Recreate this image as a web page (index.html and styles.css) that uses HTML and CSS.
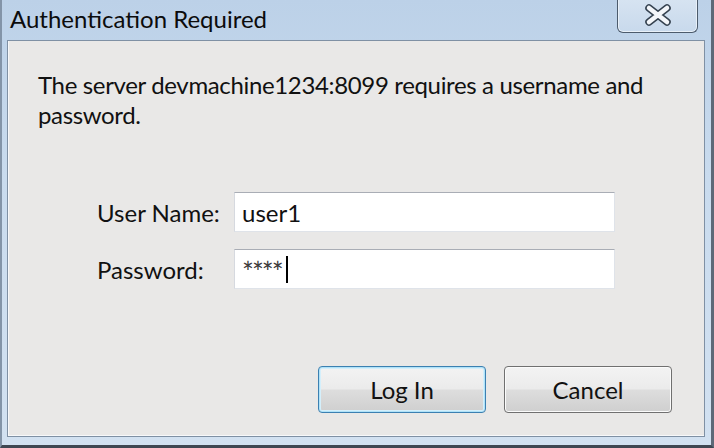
FILE: index.html
```html
<!DOCTYPE html>
<html>
<head>
<meta charset="utf-8">
<link rel="stylesheet" href="styles.css">
</head>
<body>
<div class="window">
  <div class="titlebar">
    <div class="title">Authentication Required</div>
    <div class="close">
      <svg width="30" height="24" viewBox="0 0 30 24">
        <g stroke-linecap="round" fill="none">
          <path d="M6 5 L24 19 M24 5 L6 19" stroke="#34414f" stroke-width="7.5"/>
          <path d="M6 5 L24 19 M24 5 L6 19" stroke="#f3f6fa" stroke-width="4.5"/>
        </g>
      </svg>
    </div>
  </div>
  <div class="content">
    <p class="message">The server devmachine1234:8099 requires a username and password.</p>
    <div class="form">
      <label class="label">User Name:</label>
      <div class="field"><span class="value">user1</span></div>
      <label class="label">Password:</label>
      <div class="field"><span class="stars">****</span><span class="caret"></span></div>
    </div>
    <div class="buttons">
      <div class="btn default">Log In</div>
      <div class="btn">Cancel</div>
    </div>
  </div>
</div>
</body>
</html>
```

FILE: styles.css
```css
html, body {
  margin: 0;
  padding: 0;
  background: #4a4f55;
}

.window {
  width: 714px;
  height: 448px;
  box-sizing: border-box;
  display: flex;
  flex-direction: column;
  background: linear-gradient(#bcd1e8, #c9dbee 40%, #d2e1f1);
  border-left: 2px solid #8394a8;
  border-right: 3px solid #5d6978;
  border-bottom: 3px solid #3f4752;
  padding-bottom: 8px;
  font-family: Lato, "Open Sans", sans-serif;
  color: #111;
}

.titlebar {
  height: 40px;
  flex: none;
  display: flex;
  align-items: flex-start;
}

.title {
  padding-left: 8px;
  line-height: 38px;
  font-size: 24px;
  color: #0c0c0c;
}

.close {
  margin-left: auto;
  margin-right: 13px;
  width: 81px;
  height: 33px;
  box-sizing: border-box;
  border: 1px solid #4c5b6c;
  border-top: none;
  border-radius: 0 0 6px 6px;
  background: linear-gradient(#d6e3f1, #c8d9ec);
  box-shadow: inset 0 -1px 0 #e8f0f8, inset 1px 0 0 #e8f0f8, inset -1px 0 0 #e8f0f8;
  display: flex;
  align-items: center;
  justify-content: center;
  padding-bottom: 2px;
}

.content {
  flex: 1;
  margin: 0 6px 0 5px;
  border: 1px solid #7f90a4;
  background: #e9e8e7;
  box-shadow: inset 0 -1px 0 #f7f8fa, inset 1px 0 0 #f7f8fa;
  padding: 29px 32px 0 30px;
  display: flex;
  flex-direction: column;
}

.message {
  margin: 0;
  font-size: 24px;
  line-height: 30px;
  letter-spacing: -0.35px;
}

.form {
  margin: 62px 0 0 59px;
  display: grid;
  grid-template-columns: 137px 381px;
  row-gap: 17px;
  align-items: center;
}

.label {
  font-size: 24px;
}

.field {
  height: 40px;
  box-sizing: border-box;
  background: #fff;
  border: 1px solid #dfe3e9;
  border-top-color: #a9adb5;
  border-left-color: #d6d9df;
  display: flex;
  align-items: center;
  padding-left: 7px;
}

.value {
  font-size: 24px;
}

.stars {
  font-size: 28px;
  letter-spacing: -2px;
  color: #3a3a3a;
  position: relative;
  top: 3px;
}

.caret {
  width: 2px;
  height: 27px;
  background: #000;
  margin-left: 4px;
}

.buttons {
  margin-top: 77px;
  display: flex;
  justify-content: flex-end;
  gap: 18px;
}

.btn {
  width: 168px;
  height: 47px;
  box-sizing: border-box;
  border: 1px solid #707070;
  border-radius: 4px;
  background: linear-gradient(#f3f3f3, #ebebeb 48%, #dddddd 52%, #cfcfcf);
  box-shadow: inset 0 0 0 1px #fbfbfb;
  display: flex;
  align-items: center;
  justify-content: center;
  font-size: 24px;
  color: #111;
}

.btn.default {
  border-color: #3c80b1;
  box-shadow: inset 0 0 0 1px #b0e2f8, inset 0 0 0 2px #d4effb;
}
```
